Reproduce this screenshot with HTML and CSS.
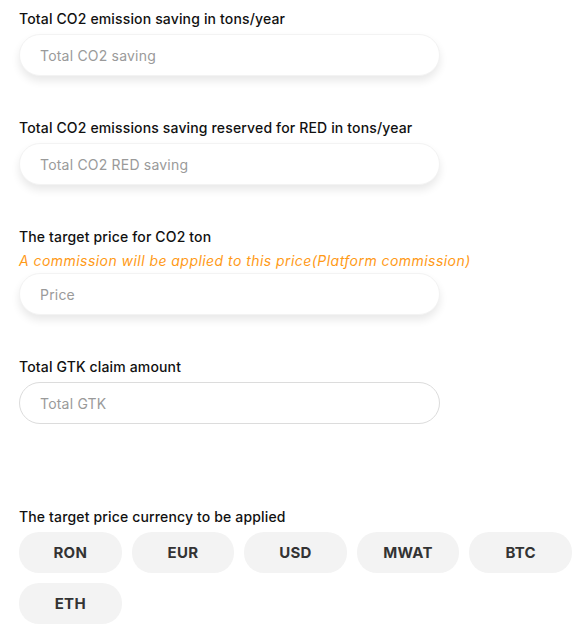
FILE: index.html
```html
<!DOCTYPE html>
<html>
<head>
<meta charset="utf-8">
<link rel="stylesheet" href="styles.css">
</head>
<body>
<div class="form">
  <div class="field">
    <label class="label">Total CO2 emission saving in tons/year</label>
    <div class="input shadow">Total CO2 saving</div>
  </div>
  <div class="field">
    <label class="label">Total CO2 emissions saving reserved for RED in tons/year</label>
    <div class="input shadow">Total CO2 RED saving</div>
  </div>
  <div class="field">
    <label class="label">The target price for CO2 ton</label>
    <div class="note">A commission will be applied to this price(Platform commission)</div>
    <div class="input shadow">Price</div>
  </div>
  <div class="field field-last">
    <label class="label">Total GTK claim amount</label>
    <div class="input bordered">Total GTK</div>
  </div>
  <div class="field">
    <label class="label">The target price currency to be applied</label>
    <div class="chips">
      <button class="chip">RON</button>
      <button class="chip">EUR</button>
      <button class="chip">USD</button>
      <button class="chip">MWAT</button>
      <button class="chip">BTC</button>
      <button class="chip">ETH</button>
    </div>
  </div>
</div>
</body>
</html>
```
FILE: styles.css
```css
* { box-sizing: border-box; }
html, body { margin: 0; background: #fff; }
body {
  font-family: "Inter", "Noto Sans", sans-serif;
  color: #111;
}
.form {
  padding: 8px 15px 0 19px;
  display: flex;
  flex-direction: column;
}
.field {
  display: flex;
  flex-direction: column;
  margin-bottom: 41px;
}
.field-last { margin-bottom: 82px; }
.label {
  font-size: 14px;
  line-height: 21px;
  font-weight: 500;
  letter-spacing: 0.15px;
  color: #111;
  margin-bottom: 5px;
}
.note {
  font-size: 14px;
  line-height: 21px;
  font-style: italic;
  letter-spacing: 0.45px;
  color: #ff9a17;
  margin-top: -2px;
  margin-bottom: 2px;
}
.input {
  width: 421px;
  height: 42px;
  border-radius: 21px;
  padding: 0 20px;
  display: flex;
  align-items: center;
  font-size: 14px;
  letter-spacing: 0.2px;
  color: #9a9a9a;
  background: #fff;
}
.shadow {
  box-shadow: 0 5px 8px rgba(0,0,0,0.09);
  border: 1px solid #f3f3f3;
}
.bordered {
  border: 1px solid #dcdcdc;
}
.chips {
  width: 553px;
  display: grid;
  grid-template-columns: repeat(5, 1fr);
  gap: 10px 10px;
}
.chip {
  height: 41px;
  border: none;
  border-radius: 20px;
  background: #f3f3f3;
  font-family: "Inter", "Noto Sans", sans-serif;
  font-weight: 700;
  font-size: 15px;
  letter-spacing: 0.3px;
  color: #333;
  padding: 0;
}
```
